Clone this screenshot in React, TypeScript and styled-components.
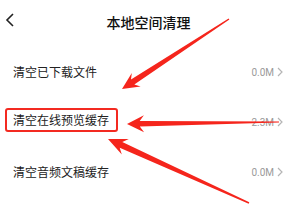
import React from "react";
import styled, { createGlobalStyle } from "styled-components";

const Global = createGlobalStyle`
  html, body { margin: 0; padding: 0; background: #fff; }
  body { font-family: "Noto Sans CJK SC", "Noto Sans", sans-serif; }
`;

const Page = styled.div`
  position: relative;
  width: 297px;
  height: 206px;
  overflow: hidden;
  background: #fff;
`;

const Header = styled.div`
  height: 47px;
  display: flex;
  align-items: center;
  justify-content: center;
  position: relative;
  padding-bottom: 4px;
  box-sizing: border-box;
`;

const Back = styled.div`
  position: absolute;
  left: 4px;
  top: 12px;
  width: 12px;
  height: 16px;
  display: flex;
`;

const Title = styled.div`
  font-size: 14px;
  font-weight: 500;
  color: #111;
`;

const List = styled.div`
  display: flex;
  flex-direction: column;
`;

const Row = styled.div`
  height: 50px;
  display: flex;
  align-items: center;
  padding: 0 13px;
  justify-content: space-between;
`;

const Label = styled.div<{ $marked?: boolean }>`
  font-size: 12px;
  color: #222;
  line-height: 20px;
  ${(p) =>
    p.$marked
      ? `border: 2px solid #f32a21; border-radius: 3px; padding: 0 7px 0 6px; margin-left: -8px; margin-top: -4px;`
      : ""}
`;

const Value = styled.div`
  display: flex;
  align-items: center;
  gap: 3px;
  font-size: 10px;
  color: #9a9a9a;
  font-family: "Roboto", "Liberation Sans", sans-serif;
  margin-right: 1px;
`;

const Overlay = styled.svg`
  position: absolute;
  left: 0;
  top: 0;
  pointer-events: none;
`;

type Pt = [number, number];

function arrowPoints(tail: Pt, tip: Pt, headLen: number, headW: number, shaftW: number, tailW: number): string {
  const dx = tip[0] - tail[0];
  const dy = tip[1] - tail[1];
  const len = Math.hypot(dx, dy);
  const ux = dx / len;
  const uy = dy / len;
  const nx = -uy;
  const ny = ux;
  const bx = tip[0] - ux * headLen;
  const by = tip[1] - uy * headLen;
  const nbx = tip[0] - ux * headLen * 0.75;
  const nby = tip[1] - uy * headLen * 0.75;
  const pts: Pt[] = [
    [tail[0] + nx * tailW, tail[1] + ny * tailW],
    [nbx + nx * shaftW, nby + ny * shaftW],
    [bx + nx * headW, by + ny * headW],
    tip,
    [bx - nx * headW, by - ny * headW],
    [nbx - nx * shaftW, nby - ny * shaftW],
    [tail[0] - nx * tailW, tail[1] - ny * tailW],
  ];
  return pts.map((p) => `${p[0].toFixed(1)},${p[1].toFixed(1)}`).join(" ");
}

const Chevron = () => (
  <svg width="6" height="10" viewBox="0 0 6 10">
    <path d="M1 1 L5 5 L1 9" fill="none" stroke="#b5b5b5" strokeWidth="1.2" />
  </svg>
);

const rows = [
  { label: "清空已下载文件", value: "0.0M" },
  { label: "清空在线预览缓存", value: "2.3M", marked: true },
  { label: "清空音频文稿缓存", value: "0.0M" },
];

export default function App() {
  const red = "#f5251c";
  return (
    <Page>
      <Global />
      <Header>
        <Back>
          <svg width="12" height="16" viewBox="0 0 12 16">
            <path d="M9 2 L3 8 L9 14" fill="none" stroke="#222" strokeWidth="1.6" />
          </svg>
        </Back>
        <Title>本地空间清理</Title>
      </Header>
      <List>
        {rows.map((r) => (
          <Row key={r.label}>
            <Label $marked={r.marked}>{r.label}</Label>
            <Value>
              {r.value}
              <Chevron />
            </Value>
          </Row>
        ))}
      </List>
      <Overlay width="297" height="206" viewBox="0 0 297 206">
        <polygon fill={red} points={arrowPoints([229, 19], [122, 89], 17, 8, 3, 0.7)} />
        <polygon fill={red} points={arrowPoints([279, 122], [127, 124], 17, 8.5, 2.8, 0.6)} />
        <polygon fill={red} points={arrowPoints([249, 203], [108, 139], 19, 8.5, 3.2, 0.8)} />
      </Overlay>
    </Page>
  );
}
